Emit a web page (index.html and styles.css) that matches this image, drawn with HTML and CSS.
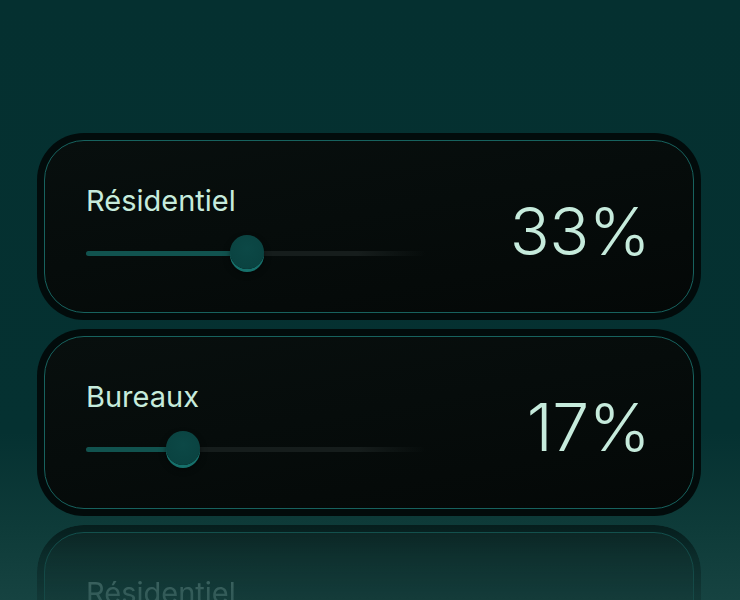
FILE: index.html
```html
<!DOCTYPE html>
<html lang="fr">
<head>
<meta charset="utf-8">
<title>Répartition</title>
<link rel="stylesheet" href="styles.css">
</head>
<body>
<main class="stack">
  <section class="card">
    <div class="card-inner">
      <div class="control">
        <div class="label">Résidentiel</div>
        <div class="slider">
          <div class="track-fill" style="width: 161px"></div>
          <div class="thumb" style="left: 144px"></div>
        </div>
      </div>
      <div class="value">33%</div>
    </div>
  </section>
  <section class="card">
    <div class="card-inner">
      <div class="control">
        <div class="label">Bureaux</div>
        <div class="slider">
          <div class="track-fill" style="width: 97px"></div>
          <div class="thumb" style="left: 80px"></div>
        </div>
      </div>
      <div class="value">17%</div>
    </div>
  </section>
  <section class="card card-ghost" aria-hidden="true">
    <div class="card-inner">
      <div class="control">
        <div class="label">Résidentiel</div>
      </div>
    </div>
  </section>
</main>
</body>
</html>
```

FILE: styles.css
```css
html, body {
  margin: 0;
  height: 100%;
}

body {
  overflow: hidden;
  background: linear-gradient(to bottom, #053030 0%, #053131 72%, #0e3b39 88%, #164341 100%);
  font-family: Inter, "Noto Sans", "Liberation Sans", sans-serif;
  color: #c6ebdc;
}

.stack {
  display: flex;
  flex-direction: column;
  gap: 9px;
  padding: 133px 39px 0 37px;
}

.card {
  background: #020b0b;
  border-radius: 47px;
  padding: 7px;
}

.card-inner {
  height: 173px;
  border: 1.5px solid #17625e;
  border-radius: 40px;
  background: linear-gradient(170deg, #080f0e 0%, #060c0b 45%, #040807 100%);
  display: flex;
  align-items: flex-start;
  justify-content: space-between;
  padding: 44.5px 43px 0 41px;
  box-sizing: border-box;
}

.control {
  display: flex;
  flex-direction: column;
}

.label {
  font-size: 29px;
  line-height: 29px;
  font-weight: 400;
}

.slider {
  position: relative;
  width: 340px;
  height: 5px;
  margin-top: 36.5px;
  border-radius: 3px;
  background: linear-gradient(to right, #161d1c 0%, #161d1c 80%, rgba(22, 29, 28, 0) 100%);
}

.track-fill {
  height: 100%;
  border-radius: 3px;
  background: #11534f;
}

.thumb {
  position: absolute;
  top: -16px;
  width: 34px;
  height: 34px;
  border-radius: 50%;
  background: radial-gradient(circle at 50% 40%, #0c4846 0%, #0a4341 70%, #093e3c 100%);
  box-shadow: 0 3px 0 #16706b, 0 4px 6px rgba(0, 0, 0, 0.5);
}

.value {
  align-self: center;
  margin-top: -35px;
  font-size: 66px;
  line-height: 66px;
  font-weight: 300;
  letter-spacing: -0.5px;
}

.card-ghost {
  opacity: 0.8;
  -webkit-mask-image: linear-gradient(to bottom, rgba(0,0,0,0.75) 0px, rgba(0,0,0,0.45) 30px, rgba(0,0,0,0.25) 70px);
  mask-image: linear-gradient(to bottom, rgba(0,0,0,0.75) 0px, rgba(0,0,0,0.45) 30px, rgba(0,0,0,0.25) 70px);
}

.card-ghost .card-inner {
  background: linear-gradient(to bottom, #0a1514 0%, #0c2220 60%, #123634 100%);
}

.card-ghost .label {
  color: #a9bdb8;
}
```
